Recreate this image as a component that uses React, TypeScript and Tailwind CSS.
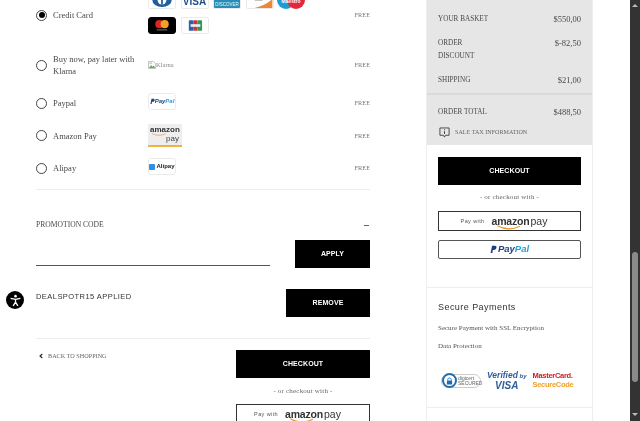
import React from "react";

const serif = "font-['Liberation_Serif',serif]";
const sans = "font-['Liberation_Sans',sans-serif]";

function Frame({ children, className = "" }: { children?: React.ReactNode; className?: string }) {
  return <div className={`w-[28px] h-[17px] shrink-0 rounded-[2px] overflow-hidden border border-[#ebebeb] ${className}`}>{children}</div>;
}

function Radio({ checked = false }: { checked?: boolean }) {
  return (
    <span className="w-[11px] h-[11px] shrink-0 rounded-full border border-[#444] bg-white flex items-center justify-center">
      {checked && <span className="w-[6px] h-[6px] rounded-full bg-black" />}
    </span>
  );
}

function Row({ label, checked, h, logos, logoClass = "" }: { label: React.ReactNode; checked?: boolean; h: string; logos: React.ReactNode; logoClass?: string }) {
  return (
    <div className={`flex items-center ${h}`}>
      <Radio checked={checked} />
      <div className={`w-[95px] ml-[6px] shrink-0 ${serif} text-[8.5px] leading-[12px] text-[#4a4a4a]`}>{label}</div>
      <div className={`flex-1 ${logoClass}`}>{logos}</div>
      <div className={`${serif} text-[6.3px] text-[#777]`}>FREE</div>
    </div>
  );
}

function Btn({ children, className = "" }: { children: React.ReactNode; className?: string }) {
  return (
    <div className={`h-[28px] bg-black flex items-center justify-center text-white ${sans} text-[7px] font-bold tracking-[0.1px] shrink-0 ${className}`}>{children}</div>
  );
}

function Smile({ className = "" }: { className?: string }) {
  return (
    <svg viewBox="0 0 30 6" className={className}>
      <path d="M1 1 Q14 8 28 1.5" fill="none" stroke="#e8962e" strokeWidth="1.3" />
    </svg>
  );
}

function PayPalMark({ className = "" }: { className?: string }) {
  return (
    <svg viewBox="0 0 10 12" className={className}>
      <path d="M3 0.5H6.8C8.8 0.5 9.6 1.8 9.2 3.6C8.8 5.6 7.4 6.6 5.4 6.6H4L3.3 11H0.8Z" fill="#1f3f7f" />
    </svg>
  );
}

function AmazonBtn() {
  return (
    <div className="h-[20px] border border-[#333] bg-white flex items-center justify-center overflow-hidden pr-[11px]">
      <span className={`${sans} text-[5.5px] text-[#555] mr-[7px] tracking-[0.4px]`}>Pay with</span>
      <span className={`relative flex items-baseline ${sans} text-[10.5px] leading-[14px] text-[#333]`}>
        <span className="font-bold tracking-[-0.2px]">amazon</span>
        <span className="ml-[1px]">pay</span>
        <Smile className="absolute left-[4px] top-[11px] w-[26px] h-[5px]" />
      </span>
    </div>
  );
}

function Or() {
  return <div className={`${serif} text-[7px] leading-[10px] text-[#666] text-center tracking-[0.2px]`}>- or checkout with -</div>;
}

function Summary({ l, r }: { l: React.ReactNode; r: string }) {
  return (
    <div className={`flex justify-between ${serif} text-[7.2px] leading-[13px] text-[#4a4a4a]`}>
      <div>{l}</div>
      <div className="text-[8.5px]">{r}</div>
    </div>
  );
}

export default function App() {
  return (
    <div className="w-[640px] h-[421px] overflow-hidden bg-white flex relative blur-[0.35px]">
      <div className="w-[426px] shrink-0 pl-[36px] pr-[56px] -mt-[8px]">
        <Row
          checked
          h="h-[46px]"
          label="Credit Card"
          logoClass="mb-[4px]"
          logos={
            <div className="flex flex-col gap-[8px]">
              <div className="flex gap-[4.5px]">
                <Frame className="bg-white">
                  <svg viewBox="0 0 28 17" className="w-full h-full">
                    <ellipse cx="14" cy="8" rx="11" ry="8" fill="#1f5f9e" />
                    <circle cx="14" cy="8" r="5" fill="#fff" />
                    <rect x="13" y="3" width="2" height="10" fill="#1f5f9e" />
                  </svg>
                </Frame>
                <Frame className="bg-white flex items-end justify-center pb-[1px]">
                  <span className={`${sans} text-[10px] leading-[10px] font-bold text-[#1f4e8c]`}>VISA</span>
                </Frame>
                <Frame className="bg-[#2b8db5] border-[#2b8db5] flex items-end justify-center">
                  <span className={`${sans} text-[4.5px] leading-[7px] text-[#dff]`}>DISCOVER</span>
                </Frame>
                <Frame className="bg-white">
                  <svg viewBox="0 0 28 17" className="w-full h-full">
                    <rect width="28" height="17" fill="#fff" />
                    <rect x="8" y="7" width="9" height="1.5" fill="#888" />
                    <path d="M8 17 Q20 14 28 7 V17 Z" fill="#e98a3a" />
                  </svg>
                </Frame>
                <div className="w-[28px] h-[17px] shrink-0 -ml-[1px]">
                  <svg viewBox="0 0 28 17" className="w-full h-full">
                    <circle cx="9" cy="8" r="9" fill="#1f9bd8" />
                    <circle cx="19" cy="8" r="9" fill="#e0293a" />
                    <text x="14" y="11" textAnchor="middle" fontSize="5" fontWeight="700" fill="#fff" fontFamily="Liberation Sans">Maestro</text>
                  </svg>
                </div>
              </div>
              <div className="flex gap-[5px]">
                <Frame className="bg-black border-black rounded-[3px]">
                  <svg viewBox="0 0 28 17" className="w-full h-full">
                    <circle cx="11" cy="7" r="4.6" fill="#e0231c" />
                    <circle cx="17" cy="7" r="4.6" fill="#f3a024" />
                    <rect x="8" y="13" width="12" height="1" fill="#888" />
                  </svg>
                </Frame>
                <Frame className="bg-white">
                  <svg viewBox="0 0 28 17" className="w-full h-full">
                    <rect x="7" y="2.5" width="5" height="12" rx="1" fill="#2a62a8" />
                    <rect x="12" y="2.5" width="5" height="12" rx="1" fill="#c8343f" />
                    <rect x="17" y="2.5" width="5" height="12" rx="1" fill="#2f9a55" />
                    <rect x="9" y="7" width="11" height="3" fill="#e9eef0" />
                  </svg>
                </Frame>
              </div>
            </div>
          }
        />
        <Row
          h="h-[54px]"
          label={<>Buy now, pay later with<br />Klarna</>}
          logos={
            <div className="flex items-center h-[9px]">
              <svg viewBox="0 0 9 9" className="w-[8px] h-[8px]">
                <path d="M0.5 0.5H6L8.5 3V8.5H0.5Z" fill="#fff" stroke="#aaa" strokeWidth="0.8" />
                <path d="M1 8L3.5 4.5L5 6.5L6.5 5L8 8Z" fill="#6aa86a" />
                <rect x="1.5" y="1.5" width="3" height="2" fill="#bcd0ea" />
              </svg>
              <span className={`${serif} text-[6.5px] text-[#888]`}>Klarna</span>
            </div>
          }
        />
        <Row
          h="h-[22px]"
          label="Paypal"
          logoClass="mb-[3px]"
          logos={
            <Frame className="bg-white flex items-center justify-center rounded-[3px]">
              <PayPalMark className="w-[5px] h-[7px]" />
              <span className={`${sans} text-[6px] font-bold italic text-[#1f3f7f]`}>Pay<span className="text-[#2b9fd8]">Pal</span></span>
            </Frame>
          }
        />
        <Row
          h="h-[43px]"
          label="Amazon Pay"
          logos={
            <div className={`w-[34px] h-[23px] bg-[#eee] border-b-[2px] border-[#efb243] ${sans} text-[8px] leading-[9px] text-[#333] relative pl-[2px] pt-[1px] overflow-hidden`}>
              <div className="font-bold">amazon</div>
              <div className="text-right pr-[3px] text-[#444]">pay</div>
              <Smile className="absolute left-[3px] top-[9px] w-[16px] h-[3px]" />
            </div>
          }
        />
        <Row
          h="h-[22px]"
          label="Alipay"
          logoClass="mb-[3px]"
          logos={
            <Frame className="bg-white flex items-center justify-center gap-[1px] rounded-[3px]">
              <span className="w-[6px] h-[6px] bg-[#2f8fe0] rounded-[1px]" />
              <span className={`${sans} text-[6px] font-bold text-[#222]`}>Alipay</span>
            </Frame>
          }
        />

        <div className="h-px bg-[#ececec] mt-[10px]" />

        <div className={`flex justify-between items-center mt-[29px] h-[12px] ${serif} text-[7.6px] text-[#4a4a4a]`}>
          <span>PROMOTION CODE</span>
          <span className="w-[5px] h-px bg-[#666] mr-[1px]" />
        </div>
        <div className="flex justify-between items-end mt-[9px]">
          <div className="w-[234px] h-[26px] border-b-[1.5px] border-[#555] mb-[2px]" />
          <Btn className="w-[75px]">APPLY</Btn>
        </div>

        <div className="flex justify-between mt-[21px]">
          <div className={`${sans} text-[7.5px] leading-[15px] tracking-[0.45px] text-[#333]`}>DEALSPOTR15 APPLIED</div>
          <Btn className="w-[84px]">REMOVE</Btn>
        </div>

        <div className="h-px bg-[#ececec] mt-[21px]" />

        <div className="flex justify-between mt-[11px]">
          <div className={`flex items-center h-[12px] ${serif} text-[6.2px] text-[#666]`}>
            <svg viewBox="0 0 6 8" className="w-[4px] h-[6px] ml-[3px] mr-[5px]">
              <path d="M5 1L1.5 4L5 7" fill="none" stroke="#222" strokeWidth="1.6" />
            </svg>
            BACK TO SHOPPING
          </div>
          <div className="w-[134px] shrink-0 flex flex-col">
            <Btn>CHECKOUT</Btn>
            <div className="mt-[8px] mb-[8px]"><Or /></div>
            <AmazonBtn />
          </div>
        </div>
      </div>

      <aside className="w-[167px] shrink-0 border-x border-[#eeeeee] self-start">
        <div className="bg-[#e6e6e6]">
          <div className="px-[11px] pt-[13px] pb-[6px] flex flex-col">
            <Summary l="YOUR BASKET" r="$550,00" />
            <div className="mt-[11px]"><Summary l={<>ORDER<br />DISCOUNT</>} r="$-82,50" /></div>
            <div className="mt-[11px]"><Summary l="SHIPPING" r="$21,00" /></div>
          </div>
          <div className="h-[2px] bg-[#d9d9d9]" />
          <div className="px-[11px] pt-[11px] pb-[6px]">
            <Summary l="ORDER TOTAL" r="$488,50" />
            <div className={`flex items-center mt-[7px] h-[13px] ${serif} text-[6.1px] text-[#666]`}>
              <svg viewBox="0 0 12 13" className="w-[11px] h-[12px] ml-[1px] mr-[5px]">
                <path d="M1 1H11V9H7L6 11L5 9H1Z" fill="none" stroke="#333" strokeWidth="0.9" />
                <rect x="5.5" y="2.5" width="1" height="1" fill="#333" />
                <rect x="5.5" y="4.5" width="1" height="3" fill="#333" />
              </svg>
              SALE TAX INFORMATION
            </div>
          </div>
        </div>

        <div className="bg-white px-[11px] pt-[12px] pb-[28px] flex flex-col">
          <Btn>CHECKOUT</Btn>
          <div className="mt-[7px] mb-[9px]"><Or /></div>
          <AmazonBtn />
          <div className="h-[18.5px] mt-[9px] rounded-[2px] border border-[#555] flex items-center justify-center gap-[1px]">
            <PayPalMark className="w-[7px] h-[9px]" />
            <span className={`${sans} text-[9.5px] font-bold italic text-[#1f3f7f]`}>Pay<span className="text-[#2b9fd8]">Pal</span></span>
          </div>
        </div>

        <div className="h-px bg-[#eeeeee]" />

        <div className="bg-white px-[11px] pt-[13px] pb-[16px]">
          <div className={`${sans} text-[9px] leading-[12px] tracking-[0.45px] text-[#333]`}>Secure Payments</div>
          <div className={`${serif} text-[7px] leading-[10px] text-[#555] mt-[10px]`}>Secure Payment with SSL Encryption</div>
          <div className={`${serif} text-[7px] leading-[10px] text-[#555] mt-[8px]`}>Data Protection</div>
          <div className="flex items-center mt-[20px] h-[20px] ml-[3px]">
            <div className="flex items-center w-[40px] h-[14px] rounded-full border border-[#ccc]">
              <span className="w-[15px] h-[15px] rounded-full border-[2px] border-[#1f6fb0] shrink-0 flex items-center justify-center">
                <svg viewBox="0 0 8 9" className="w-[7px] h-[8px]">
                  <path d="M2 4V2.6C2 0.6 6 0.6 6 2.6V4" fill="none" stroke="#1f6fb0" strokeWidth="1" />
                  <rect x="1" y="4" width="6" height="4.5" rx="0.6" fill="#1f6fb0" />
                </svg>
              </span>
              <span className={`${sans} text-[5px] leading-[5px] text-[#666] ml-[1px]`}>digicert<br />SECURED</span>
            </div>
            <div className={`${sans} italic font-bold text-[#2f5f9a] ml-[6px] text-center`}>
              <div className="text-[8.5px] leading-[9px] whitespace-nowrap">Verified<span className="text-[6px]"> by</span></div>
              <div className="text-[10px] leading-[10px]">VISA</div>
            </div>
            <div className={`${sans} font-bold ml-[6px] text-[7.5px] leading-[8.5px] tracking-[-0.3px]`}>
              <div className="text-[#c9202c]">MasterCard.</div>
              <div className="text-[#efa02c]">SecureCode</div>
            </div>
          </div>
        </div>

        <div className="h-px bg-[#eeeeee]" />
        <div className="h-[20px] bg-white" />
      </aside>

      <div className="ml-auto w-[10px] h-full bg-[#333333] flex flex-col items-center pt-[4px] pb-[5px]">
        <span className="w-0 h-0 shrink-0 border-x-[3px] border-x-transparent border-b-[3px] border-b-[#bbb]" />
        <span className="w-[6px] h-[130px] shrink-0 rounded-full bg-[#8a8a8a] mt-[245px]" />
        <span className="w-0 h-0 shrink-0 mt-auto border-x-[3px] border-x-transparent border-t-[3px] border-t-[#bbb]" />
      </div>

      <div className="absolute left-[6px] top-[291px] w-[18px] h-[18px] rounded-full bg-black flex items-center justify-center">
        <svg viewBox="0 0 12 12" className="w-[13px] h-[13px]">
          <circle cx="6" cy="2" r="1.2" fill="#fff" />
          <path d="M1.5 4L6 5L10.5 4M6 5V7.5M6 7.5L3.8 11M6 7.5L8.2 11" fill="none" stroke="#fff" strokeWidth="1.2" />
        </svg>
      </div>
    </div>
  );
}
